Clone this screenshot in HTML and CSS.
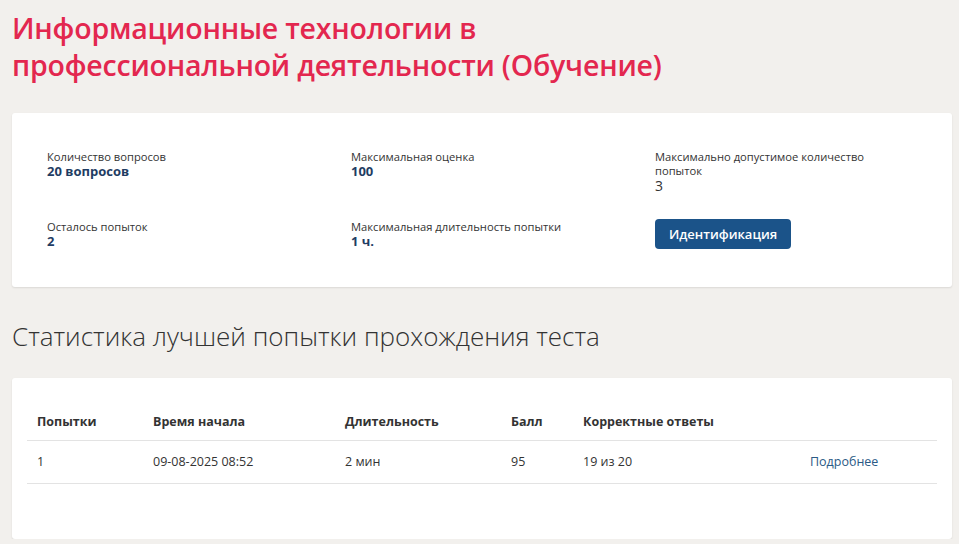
FILE: index.html
```html
<!DOCTYPE html>
<html lang="ru">
<head>
  <meta charset="UTF-8" />
  <meta name="viewport" content="width=device-width, initial-scale=1.0"/>
  <title>Информационные технологии в профессиональной деятельности</title>
  <link rel="stylesheet" href="styles.css">
</head>
<body>
  <div class="page">
    <h1 class="title">Информационные технологии в<br>профессиональной деятельности (Обучение)</h1>

    <div class="card info">
      <div class="info-item">
        <div class="label">Количество вопросов</div>
        <div class="value">20 вопросов</div>
      </div>
      <div class="info-item">
        <div class="label">Максимальная оценка</div>
        <div class="value">100</div>
      </div>
      <div class="info-item">
        <div class="label">Максимально допустимое количество попыток</div>
        <div class="value plain">3</div>
      </div>
      <div class="info-item">
        <div class="label">Осталось попыток</div>
        <div class="value">2</div>
      </div>
      <div class="info-item">
        <div class="label">Максимальная длительность попытки</div>
        <div class="value">1 ч.</div>
      </div>
      <div class="info-item">
        <button class="btn">Идентификация</button>
      </div>
    </div>

    <h2 class="subtitle">Статистика лучшей попытки прохождения теста</h2>

    <div class="card stats">
      <table class="attempts">
        <thead>
          <tr>
            <th class="c1">Попытки</th>
            <th class="c2">Время начала</th>
            <th class="c3">Длительность</th>
            <th class="c4">Балл</th>
            <th class="c5">Корректные ответы</th>
            <th class="c6"></th>
          </tr>
        </thead>
        <tbody>
          <tr>
            <td>1</td>
            <td>09-08-2025 08:52</td>
            <td>2 мин</td>
            <td>95</td>
            <td>19 из 20</td>
            <td><a href="#" class="more">Подробнее</a></td>
          </tr>
        </tbody>
      </table>
    </div>
  </div>
</body>
</html>
```

FILE: styles.css
```css
* {
  margin: 0;
  padding: 0;
  box-sizing: border-box;
}

body {
  background-color: #f2f0ed;
  font-family: 'Open Sans', 'Noto Sans', sans-serif;
  color: #333;
}

.page {
  width: 940px;
  margin-left: 12px;
  padding-top: 10px;
}

.title {
  font-family: 'Open Sans', sans-serif;
  font-weight: 600;
  font-size: 28.5px;
  line-height: 37px;
  color: #e3274f;
  letter-spacing: -0.2px;
}

.card {
  background: #fff;
  border-radius: 3px;
  box-shadow: 0 1px 2px rgba(0, 0, 0, 0.1);
}

.info {
  margin-top: 29px;
  padding: 37px 35px 38px 35px;
  display: grid;
  grid-template-columns: 304px 304px 250px;
  row-gap: 27px;
}

.label {
  font-size: 11.2px;
  line-height: 14px;
  color: #333;
}

.value {
  font-size: 13px;
  line-height: 15px;
  font-weight: 700;
  color: #1f3d63;
}

.value.plain {
  font-weight: 400;
  font-size: 14px;
  color: #333;
}

.btn {
  margin-top: -1px;
  background: #1b5389;
  color: #fff;
  border: none;
  border-radius: 4px;
  font-family: 'Open Sans', sans-serif;
  font-size: 13px;
  font-weight: 600;
  height: 30px;
  padding: 0 14px;
}

.subtitle {
  margin-top: 33px;
  font-weight: 300;
  font-size: 26px;
  line-height: 32px;
  color: #333;
}

.stats {
  margin-top: 26px;
  padding: 25px 15px 55px 15px;
}

.attempts {
  width: 100%;
  border-collapse: collapse;
  font-size: 12.5px;
}

.attempts th {
  text-align: left;
  font-weight: 700;
  height: 37px;
  padding: 0 10px;
  border-bottom: 1px solid #e3e3e3;
}

.attempts td {
  height: 43px;
  padding: 0 10px;
  border-bottom: 1px solid #e3e3e3;
}

.c1 { width: 116px; }
.c2 { width: 192px; }
.c3 { width: 166px; }
.c4 { width: 72px; }
.c5 { width: 227px; }

.more {
  color: #2b5a86;
  text-decoration: none;
}
```
